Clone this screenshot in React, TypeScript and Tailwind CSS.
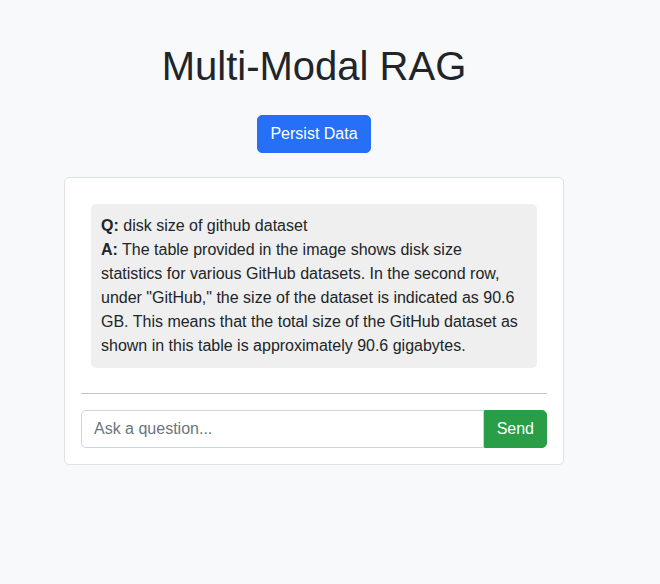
import React, { useState } from 'react';

type IMessage = {
  question: string;
  answer: string;
};

const messages: IMessage[] = [
  {
    question: 'disk size of github dataset',
    answer:
      'The table provided in the image shows disk size statistics for various GitHub datasets. In the second row, under "GitHub," the size of the dataset is indicated as 90.6 GB. This means that the total size of the GitHub dataset as shown in this table is approximately 90.6 gigabytes.',
  },
];

export default function App() {
  const [query, setQuery] = useState('');

  return (
    <div className="min-h-[584px] bg-[#f8f9fa] font-['Liberation_Sans',Arial,sans-serif] text-[#212529]">
      <div className="ml-[64px] flex w-[500px] flex-col items-center pt-[42px]">
        <h1 className="text-[40px] leading-[48px] font-normal">Multi-Modal RAG</h1>
        <button className="mt-[25px] rounded-[5px] border border-[#2670f8] bg-[#2670f8] px-3 py-1.5 text-base leading-6 text-white">
          Persist Data
        </button>

        <div className="mt-[24px] w-full rounded-[5px] border border-[#dee2e6] bg-white p-4">
          <div className="flex flex-col">
            {messages.map((m, i) => (
              <div key={i} className="m-[10px] rounded-[5px] bg-[#efefef] p-[10px] text-base leading-6">
                <div>
                  <strong>Q:</strong> {m.question}
                </div>
                <div>
                  <strong>A:</strong> {m.answer}
                </div>
              </div>
            ))}
          </div>
          <hr className="mt-[15px] mb-4 border-t border-[#c4c4c4]" />
          <div className="flex">
            <input
              value={query}
              onChange={(e) => setQuery(e.target.value)}
              placeholder="Ask a question..."
              className="h-[38px] flex-1 rounded-l-[5px] border border-[#ced4da] px-3 text-base text-[#212529] outline-none placeholder:text-[#6c757d]"
            />
            <button className="h-[38px] rounded-r-[5px] border border-[#2a9d47] bg-[#2a9d47] px-3 text-base text-white">
              Send
            </button>
          </div>
        </div>
      </div>
    </div>
  );
}
